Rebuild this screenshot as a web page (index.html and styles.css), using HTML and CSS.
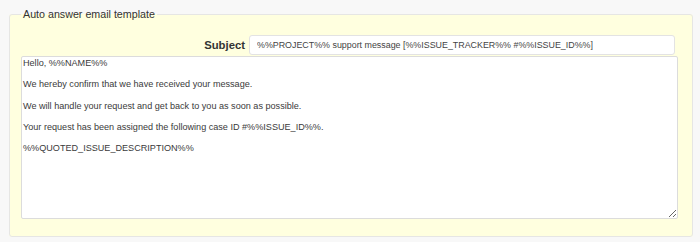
FILE: index.html
```html
<!DOCTYPE html>
<html>
<head>
<meta charset="utf-8">
<link rel="stylesheet" href="styles.css">
</head>
<body>
<fieldset class="box">
  <legend class="box-title">Auto answer email template</legend>
  <div class="subject-row">
    <label class="subject-label" for="subj">Subject</label>
    <input class="subject-input" id="subj" type="text" value="%%PROJECT%% support message [%%ISSUE_TRACKER%% #%%ISSUE_ID%%]">
  </div>
  <textarea class="body-input">Hello, %%NAME%%

We hereby confirm that we have received your message.

We will handle your request and get back to you as soon as possible.

Your request has been assigned the following case ID #%%ISSUE_ID%%.

%%QUOTED_ISSUE_DESCRIPTION%%</textarea>
</fieldset>
</body>
</html>
```
FILE: styles.css
```css
html, body {
  margin: 0;
  padding: 0;
  background: #f8f8f8;
  font-family: "Liberation Sans", Arial, sans-serif;
  color: #333;
}
body {
  padding: 7px 7px 0 9px;
}
.box {
  margin: 0;
  background: #ffffdf;
  border: 1px solid #e6e6e4;
  border-radius: 3px;
  padding: 0 14px 17px 11px;
  height: 230px;
  box-sizing: border-box;
  display: flex;
  flex-direction: column;
}
.box-title {
  font-size: 10.7px;
  color: #333;
  padding: 0 2px;
  margin-left: 0;
  line-height: 14px;
}
.subject-row {
  display: flex;
  justify-content: flex-end;
  align-items: center;
  gap: 4px;
  padding: 14px 3px 0 0;
}
.subject-label {
  font-weight: bold;
  font-size: 11.3px;
  color: #333;
}
.subject-input {
  margin: 0;
  width: 426px;
  height: 20px;
  box-sizing: border-box;
  border: 1px solid #e3e3e3;
  border-radius: 3px;
  background: #fff;
  font-family: "Liberation Sans", Arial, sans-serif;
  font-size: 8.9px;
  color: #444;
  padding: 0 7px;
  outline: none;
}
.body-input {
  margin: 1px 0 0 0;
  flex: 1;
  box-sizing: border-box;
  width: 100%;
  border: 1px solid #dcdcdc;
  border-radius: 2px;
  background: #fff;
  font-family: "Liberation Sans", Arial, sans-serif;
  font-size: 9.1px;
  line-height: 10.67px;
  color: #3a3a3a;
  padding: 1px 1px;
  resize: vertical;
  outline: none;
}
```
